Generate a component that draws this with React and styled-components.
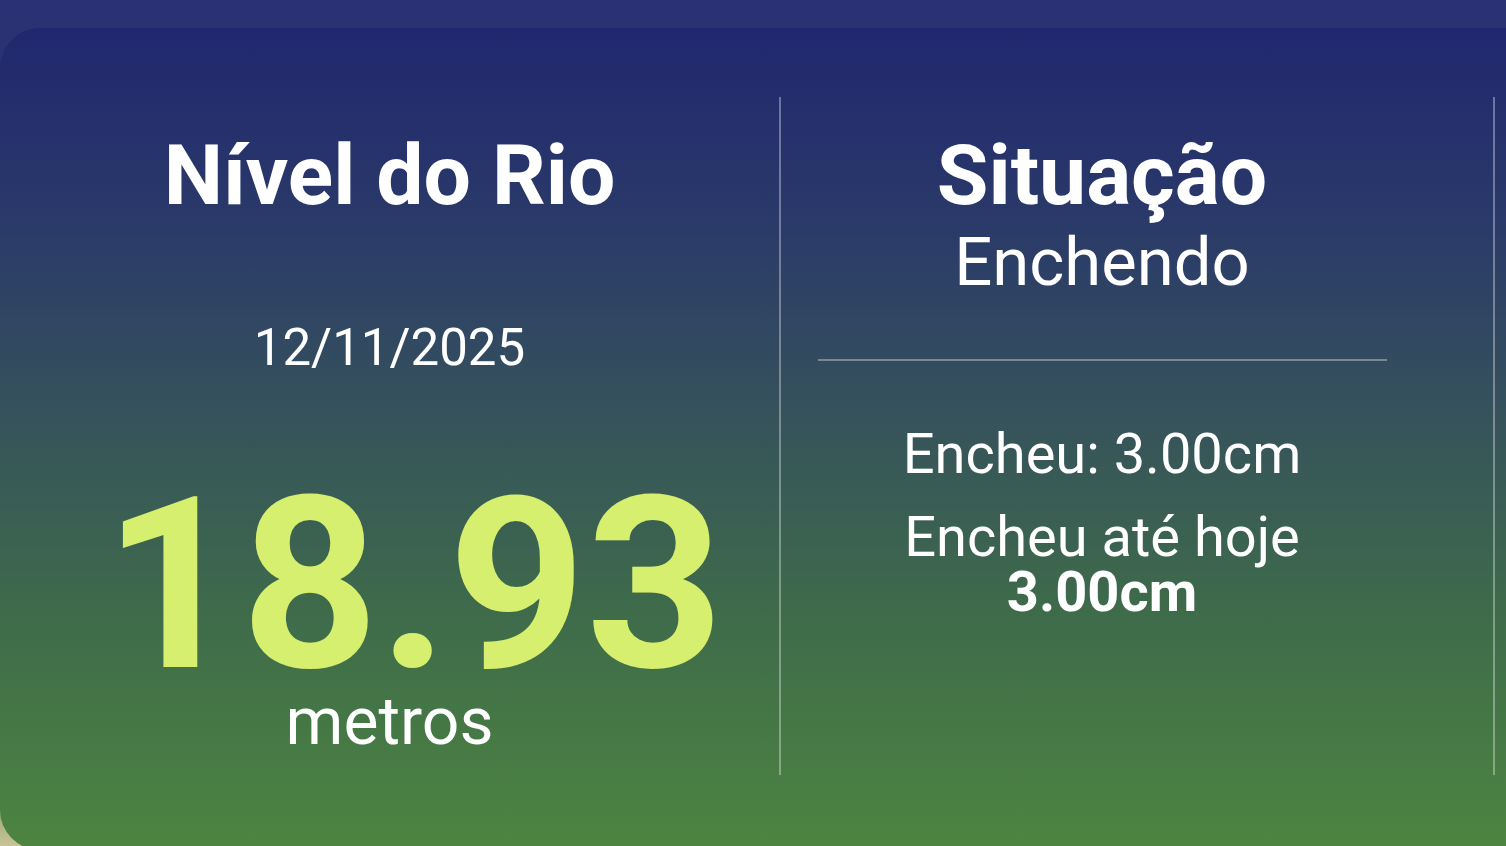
import React from "react";
import styled, { createGlobalStyle } from "styled-components";

const GlobalStyle = createGlobalStyle`
  html, body {
    margin: 0;
    padding: 0;
  }
  body {
    font-family: Roboto, "Liberation Sans", sans-serif;
    background: linear-gradient(180deg, #2a3174 0%, #2b3a6e 55%, #5f8547 90%, #c9c39a 100%);
    overflow: hidden;
  }
`;

const Page = styled.div`
  width: 1506px;
  height: 846px;
  padding-top: 28px;
  box-sizing: border-box;
  overflow: hidden;
`;

const Card = styled.div`
  display: flex;
  align-items: stretch;
  width: 1700px;
  height: 822px;
  box-sizing: border-box;
  padding: 69px 0 75px;
  border-radius: 40px;
  background: linear-gradient(
    180deg,
    #21276f 0%,
    #2a3a69 24%,
    #35505d 45%,
    #3e6a4b 70%,
    #4d8540 100%
  );
  color: #ffffff;
`;

const Column = styled.div`
  display: flex;
  flex-direction: column;
  align-items: center;
  flex: 0 0 ${(p) => p.$width}px;
  margin-right: ${(p) => p.$gap || 0}px;
  text-align: center;
`;

const Divider = styled.div`
  flex: 0 0 2px;
  background: rgba(255, 255, 255, 0.34);
`;

const Title = styled.h2`
  margin: 37px 0 0;
  font-size: 84px;
  font-weight: 700;
  line-height: 1;
`;

const DateText = styled.div`
  margin-top: 104px;
  font-size: 51px;
  line-height: 1;
`;

const LevelValue = styled.div`
  margin: 116px 0 0 48px;
  font-size: 240px;
  font-weight: 700;
  line-height: 0.8;
  color: #d6ef6e;
`;

const Unit = styled.div`
  margin-top: 8px;
  font-size: 66px;
  line-height: 1;
`;

const Status = styled.div`
  margin-top: 11px;
  font-size: 67px;
  line-height: 1;
`;

const Rule = styled.hr`
  width: 569px;
  height: 2px;
  margin: 63px 0 0;
  border: 0;
  background: rgba(255, 255, 255, 0.34);
`;

const Stat = styled.p`
  margin: ${(p) => p.$top}px 0 0;
  font-size: 56px;
  line-height: 55px;

  strong {
    font-weight: 700;
  }
`;

const App = () => {
  return (
    <Page>
      <GlobalStyle />
      <Card>
        <Column $width={779}>
          <Title>Nível do Rio</Title>
          <DateText>12/11/2025</DateText>
          <LevelValue>18.93</LevelValue>
          <Unit>metros</Unit>
        </Column>
        <Divider />
        <Column $width={642} $gap={70}>
          <Title>Situação</Title>
          <Status>Enchendo</Status>
          <Rule />
          <Stat $top={66}>Encheu: 3.00cm</Stat>
          <Stat $top={28}>
            Encheu até hoje
            <br />
            <strong>3.00cm</strong>
          </Stat>
        </Column>
        <Divider />
        <Column $width={400} />
      </Card>
    </Page>
  );
};

export default App;
